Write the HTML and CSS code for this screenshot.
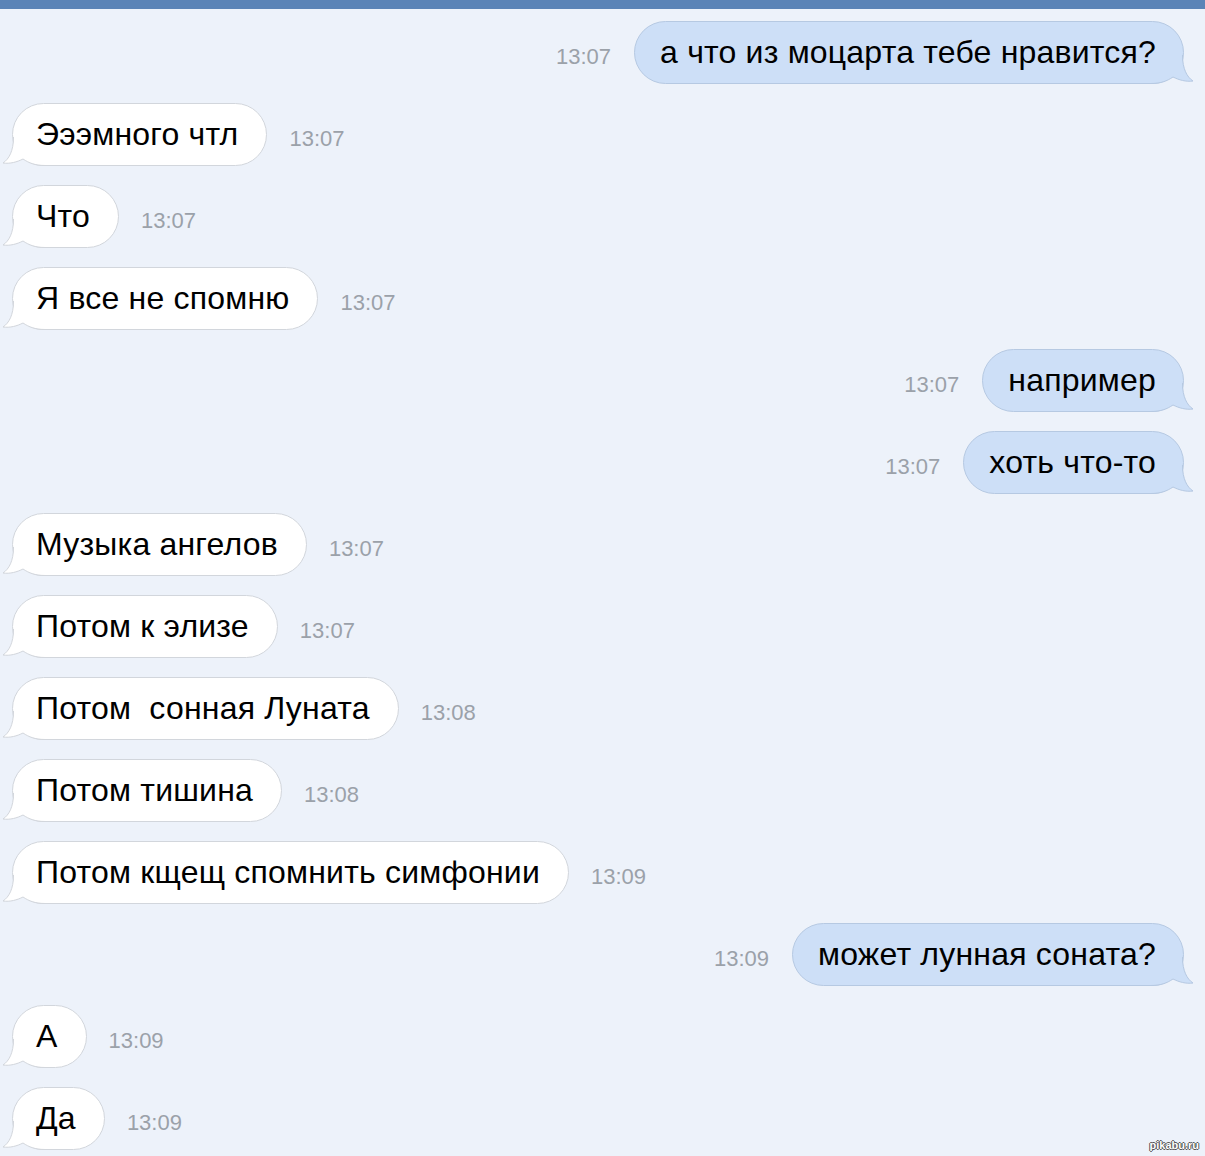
FILE: index.html
```html
<!DOCTYPE html>
<html lang="ru">

<head>
  <meta charset="UTF-8">
  <meta name="viewport" content="width=device-width, initial-scale=1.0">
  <title>Диалог</title>
  <link rel="stylesheet" href="styles.css">
</head>

<body>
  <div class="chat">
    <div class="chat__bar"></div>
    <div class="chat__list">
      <div class="msg msg--out"><span class="msg__time">13:07</span><div class="bubble"><span class="bubble__text">а что из моцарта тебе нравится?</span><svg class="tail" viewBox="0 0 44 37"><path class="tail__fill" d="M13,0 L13,8 C12,22 8,30 2,34 C9,35 16,33 22,30 C28,34 34,36 44,36 L44,0 Z"/><path class="tail__line" d="M12.5,8 C12.5,22 8,30 2,34 C9,35 16,33 22,30 C28,34 34,36.5 44,36.5"/></svg></div></div>
      <div class="msg msg--in"><div class="bubble"><span class="bubble__text">Эээмного чтл</span><svg class="tail" viewBox="0 0 44 37"><path class="tail__fill" d="M13,0 L13,8 C12,22 8,30 2,34 C9,35 16,33 22,30 C28,34 34,36 44,36 L44,0 Z"/><path class="tail__line" d="M12.5,8 C12.5,22 8,30 2,34 C9,35 16,33 22,30 C28,34 34,36.5 44,36.5"/></svg></div><span class="msg__time">13:07</span></div>
      <div class="msg msg--in"><div class="bubble"><span class="bubble__text">Что</span><svg class="tail" viewBox="0 0 44 37"><path class="tail__fill" d="M13,0 L13,8 C12,22 8,30 2,34 C9,35 16,33 22,30 C28,34 34,36 44,36 L44,0 Z"/><path class="tail__line" d="M12.5,8 C12.5,22 8,30 2,34 C9,35 16,33 22,30 C28,34 34,36.5 44,36.5"/></svg></div><span class="msg__time">13:07</span></div>
      <div class="msg msg--in"><div class="bubble"><span class="bubble__text">Я все не спомню</span><svg class="tail" viewBox="0 0 44 37"><path class="tail__fill" d="M13,0 L13,8 C12,22 8,30 2,34 C9,35 16,33 22,30 C28,34 34,36 44,36 L44,0 Z"/><path class="tail__line" d="M12.5,8 C12.5,22 8,30 2,34 C9,35 16,33 22,30 C28,34 34,36.5 44,36.5"/></svg></div><span class="msg__time">13:07</span></div>
      <div class="msg msg--out"><span class="msg__time">13:07</span><div class="bubble"><span class="bubble__text">например</span><svg class="tail" viewBox="0 0 44 37"><path class="tail__fill" d="M13,0 L13,8 C12,22 8,30 2,34 C9,35 16,33 22,30 C28,34 34,36 44,36 L44,0 Z"/><path class="tail__line" d="M12.5,8 C12.5,22 8,30 2,34 C9,35 16,33 22,30 C28,34 34,36.5 44,36.5"/></svg></div></div>
      <div class="msg msg--out"><span class="msg__time">13:07</span><div class="bubble"><span class="bubble__text">хоть что-то</span><svg class="tail" viewBox="0 0 44 37"><path class="tail__fill" d="M13,0 L13,8 C12,22 8,30 2,34 C9,35 16,33 22,30 C28,34 34,36 44,36 L44,0 Z"/><path class="tail__line" d="M12.5,8 C12.5,22 8,30 2,34 C9,35 16,33 22,30 C28,34 34,36.5 44,36.5"/></svg></div></div>
      <div class="msg msg--in"><div class="bubble"><span class="bubble__text">Музыка ангелов</span><svg class="tail" viewBox="0 0 44 37"><path class="tail__fill" d="M13,0 L13,8 C12,22 8,30 2,34 C9,35 16,33 22,30 C28,34 34,36 44,36 L44,0 Z"/><path class="tail__line" d="M12.5,8 C12.5,22 8,30 2,34 C9,35 16,33 22,30 C28,34 34,36.5 44,36.5"/></svg></div><span class="msg__time">13:07</span></div>
      <div class="msg msg--in"><div class="bubble"><span class="bubble__text">Потом к элизе</span><svg class="tail" viewBox="0 0 44 37"><path class="tail__fill" d="M13,0 L13,8 C12,22 8,30 2,34 C9,35 16,33 22,30 C28,34 34,36 44,36 L44,0 Z"/><path class="tail__line" d="M12.5,8 C12.5,22 8,30 2,34 C9,35 16,33 22,30 C28,34 34,36.5 44,36.5"/></svg></div><span class="msg__time">13:07</span></div>
      <div class="msg msg--in"><div class="bubble"><span class="bubble__text">Потом&nbsp; сонная Луната</span><svg class="tail" viewBox="0 0 44 37"><path class="tail__fill" d="M13,0 L13,8 C12,22 8,30 2,34 C9,35 16,33 22,30 C28,34 34,36 44,36 L44,0 Z"/><path class="tail__line" d="M12.5,8 C12.5,22 8,30 2,34 C9,35 16,33 22,30 C28,34 34,36.5 44,36.5"/></svg></div><span class="msg__time">13:08</span></div>
      <div class="msg msg--in"><div class="bubble"><span class="bubble__text">Потом тишина</span><svg class="tail" viewBox="0 0 44 37"><path class="tail__fill" d="M13,0 L13,8 C12,22 8,30 2,34 C9,35 16,33 22,30 C28,34 34,36 44,36 L44,0 Z"/><path class="tail__line" d="M12.5,8 C12.5,22 8,30 2,34 C9,35 16,33 22,30 C28,34 34,36.5 44,36.5"/></svg></div><span class="msg__time">13:08</span></div>
      <div class="msg msg--in"><div class="bubble"><span class="bubble__text">Потом кщещ спомнить симфонии</span><svg class="tail" viewBox="0 0 44 37"><path class="tail__fill" d="M13,0 L13,8 C12,22 8,30 2,34 C9,35 16,33 22,30 C28,34 34,36 44,36 L44,0 Z"/><path class="tail__line" d="M12.5,8 C12.5,22 8,30 2,34 C9,35 16,33 22,30 C28,34 34,36.5 44,36.5"/></svg></div><span class="msg__time">13:09</span></div>
      <div class="msg msg--out"><span class="msg__time">13:09</span><div class="bubble"><span class="bubble__text">может лунная соната?</span><svg class="tail" viewBox="0 0 44 37"><path class="tail__fill" d="M13,0 L13,8 C12,22 8,30 2,34 C9,35 16,33 22,30 C28,34 34,36 44,36 L44,0 Z"/><path class="tail__line" d="M12.5,8 C12.5,22 8,30 2,34 C9,35 16,33 22,30 C28,34 34,36.5 44,36.5"/></svg></div></div>
      <div class="msg msg--in"><div class="bubble"><span class="bubble__text">А</span><svg class="tail" viewBox="0 0 44 37"><path class="tail__fill" d="M13,0 L13,8 C12,22 8,30 2,34 C9,35 16,33 22,30 C28,34 34,36 44,36 L44,0 Z"/><path class="tail__line" d="M12.5,8 C12.5,22 8,30 2,34 C9,35 16,33 22,30 C28,34 34,36.5 44,36.5"/></svg></div><span class="msg__time">13:09</span></div>
      <div class="msg msg--in"><div class="bubble"><span class="bubble__text">Да</span><svg class="tail" viewBox="0 0 44 37"><path class="tail__fill" d="M13,0 L13,8 C12,22 8,30 2,34 C9,35 16,33 22,30 C28,34 34,36 44,36 L44,0 Z"/><path class="tail__line" d="M12.5,8 C12.5,22 8,30 2,34 C9,35 16,33 22,30 C28,34 34,36.5 44,36.5"/></svg></div><span class="msg__time">13:09</span></div>
    </div>
    <div class="chat__mark">pikabu.ru</div>
  </div>
</body>

</html>
```

FILE: styles.css
```css
    body {
      margin: 0;
      font-family: "Liberation Sans", Arial, Helvetica, sans-serif;
      background: #edf2fa;
    }

    .chat {
      position: relative;
      height: 1156px;
      overflow: hidden;
      background: #edf2fa;
    }

    .chat__bar {
      height: 9px;
      background: #5b84b7;
    }

    .chat__list {
      display: flex;
      flex-direction: column;
      gap: 19px;
      padding: 12px 21px 0 12px;
    }

    .msg {
      display: flex;
      align-items: center;
      height: 63px;
    }

    .msg--out {
      justify-content: flex-end;
    }

    .bubble {
      position: relative;
      box-sizing: border-box;
      height: 63px;
      line-height: 60px;
      padding: 0 28px 0 23px;
      border: 1px solid #d2d6dc;
      border-radius: 32px;
      background: #fff;
      color: #000;
      font-size: 32px;
      letter-spacing: 0.2px;
      white-space: nowrap;
    }

    .bubble__text {
      position: relative;
      z-index: 1;
    }

    .msg--out .bubble {
      background: #cddff7;
      border-color: #b6c9e2;
      padding: 0 27px 0 25px;
    }

    .tail {
      position: absolute;
      left: -12px;
      bottom: -1px;
      width: 44px;
      height: 37px;
      overflow: visible;
    }

    .msg--out .tail {
      left: auto;
      right: -12px;
      transform: scaleX(-1);
    }

    .tail__fill {
      fill: #fff;
    }

    .tail__line {
      fill: none;
      stroke: #d2d6dc;
      stroke-width: 1;
    }

    .msg--out .tail__fill {
      fill: #cddff7;
    }

    .msg--out .tail__line {
      stroke: #b6c9e2;
    }

    .msg__time {
      margin-top: 9px;
      font-size: 22px;
      color: #9ba1a9;
    }

    .msg--in .msg__time {
      margin-left: 22px;
    }

    .msg--out .msg__time {
      margin-right: 23px;
    }

    .chat__mark {
      position: absolute;
      right: 6px;
      bottom: 5px;
      font-size: 11px;
      font-weight: 700;
      color: #fff;
      text-shadow: 1px 0 0 #555, -1px 0 0 #555, 0 1px 0 #555, 0 -1px 0 #555;
    }
```
